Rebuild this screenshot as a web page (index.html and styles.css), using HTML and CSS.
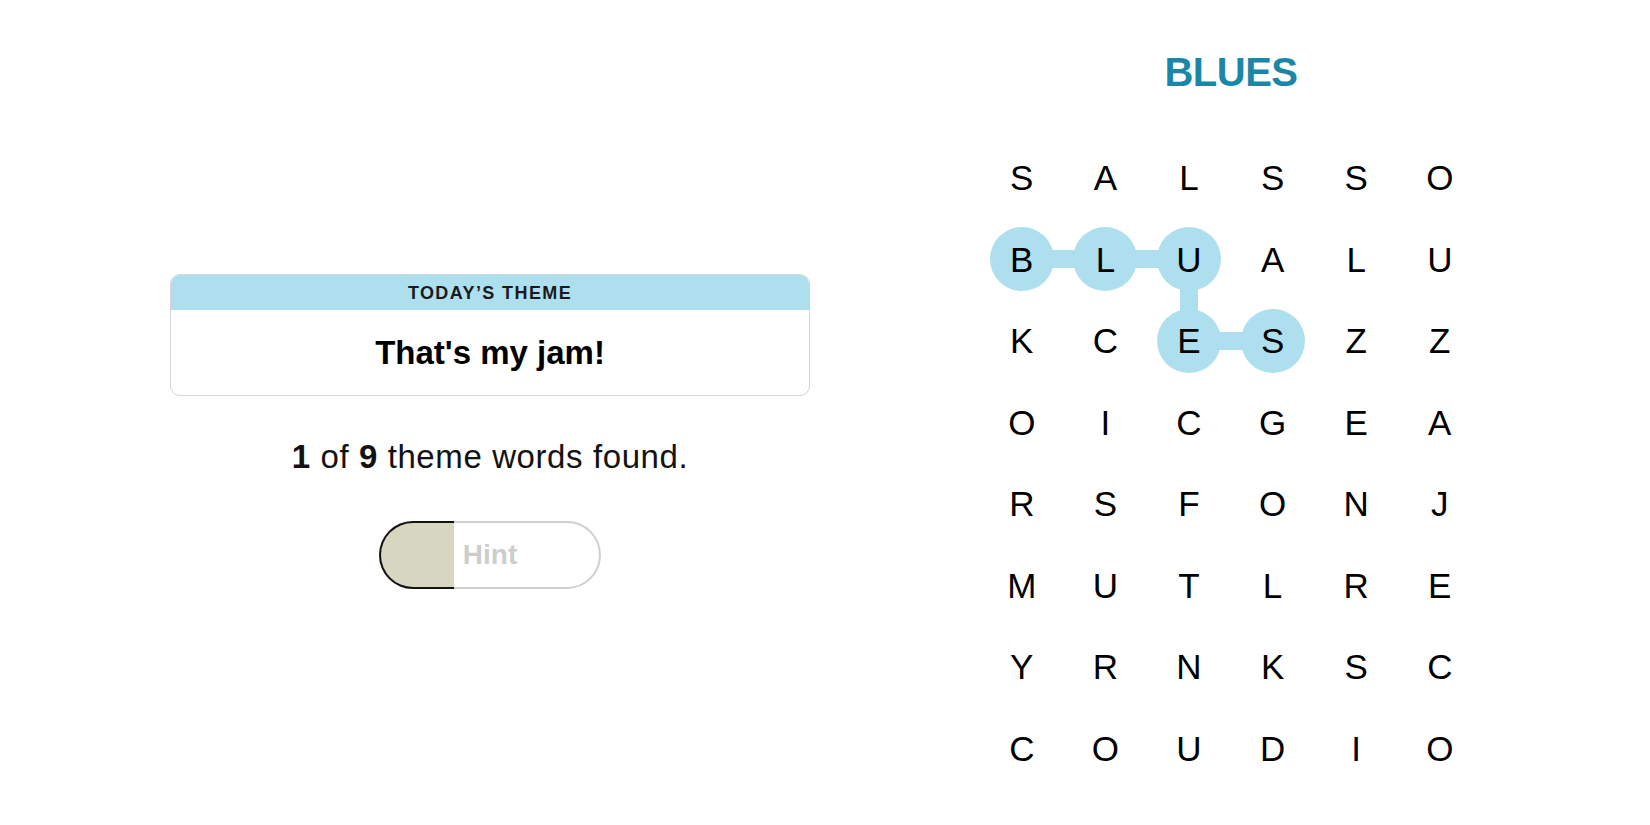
FILE: index.html
```html
<!DOCTYPE html>
<html lang="en">
<head>
    <meta charset="UTF-8">
    <meta name="viewport" content="width=device-width, initial-scale=1.0">
    <title>Strands</title>
    <link rel="stylesheet" href="styles.css">
</head>
<body>
    <div class="page">
        <div class="side">
            <div class="theme-box">
                <div class="theme-head">Today’s Theme</div>
                <div class="theme-body">That's my jam!</div>
            </div>

            <p class="progress"><strong>1</strong> of <strong>9</strong> theme words found.</p>

            <button class="hint-btn">
                <span class="hint-fill"></span>
                <span class="hint-label">Hint</span>
            </button>
        </div>

        <div class="board">
            <h2 class="word">BLUES</h2>

            <div class="grid">
                <!-- row 1 -->
                <div class="cell"><span>S</span></div>
                <div class="cell"><span>A</span></div>
                <div class="cell"><span>L</span></div>
                <div class="cell"><span>S</span></div>
                <div class="cell"><span>S</span></div>
                <div class="cell"><span>O</span></div>
                <!-- row 2 -->
                <div class="cell found link-right"><span>B</span></div>
                <div class="cell found link-right"><span>L</span></div>
                <div class="cell found link-down"><span>U</span></div>
                <div class="cell"><span>A</span></div>
                <div class="cell"><span>L</span></div>
                <div class="cell"><span>U</span></div>
                <!-- row 3 -->
                <div class="cell"><span>K</span></div>
                <div class="cell"><span>C</span></div>
                <div class="cell found link-right"><span>E</span></div>
                <div class="cell found"><span>S</span></div>
                <div class="cell"><span>Z</span></div>
                <div class="cell"><span>Z</span></div>
                <!-- row 4 -->
                <div class="cell"><span>O</span></div>
                <div class="cell"><span>I</span></div>
                <div class="cell"><span>C</span></div>
                <div class="cell"><span>G</span></div>
                <div class="cell"><span>E</span></div>
                <div class="cell"><span>A</span></div>
                <!-- row 5 -->
                <div class="cell"><span>R</span></div>
                <div class="cell"><span>S</span></div>
                <div class="cell"><span>F</span></div>
                <div class="cell"><span>O</span></div>
                <div class="cell"><span>N</span></div>
                <div class="cell"><span>J</span></div>
                <!-- row 6 -->
                <div class="cell"><span>M</span></div>
                <div class="cell"><span>U</span></div>
                <div class="cell"><span>T</span></div>
                <div class="cell"><span>L</span></div>
                <div class="cell"><span>R</span></div>
                <div class="cell"><span>E</span></div>
                <!-- row 7 -->
                <div class="cell"><span>Y</span></div>
                <div class="cell"><span>R</span></div>
                <div class="cell"><span>N</span></div>
                <div class="cell"><span>K</span></div>
                <div class="cell"><span>S</span></div>
                <div class="cell"><span>C</span></div>
                <!-- row 8 -->
                <div class="cell"><span>C</span></div>
                <div class="cell"><span>O</span></div>
                <div class="cell"><span>U</span></div>
                <div class="cell"><span>D</span></div>
                <div class="cell"><span>I</span></div>
                <div class="cell"><span>O</span></div>
            </div>
        </div>
    </div>
</body>
</html>
```

FILE: styles.css
```css
body {
    margin: 0;
    background: #fff;
    color: #121212;
    font-family: 'Liberation Sans', Arial, sans-serif;
}

.page {
    display: flex;
    gap: 170px;
    padding-left: 170px;
    height: 825px;
    box-sizing: border-box;
}

/* left column */
.side {
    width: 640px;
    padding-top: 274px;
    display: flex;
    flex-direction: column;
    align-items: center;
}

.theme-box {
    width: 100%;
    border: 1.5px solid #d5d5d5;
    border-radius: 10px;
    overflow: hidden;
    box-sizing: border-box;
}

.theme-head {
    height: 35px;
    line-height: 36px;
    background: #aedfee;
    text-align: center;
    text-transform: uppercase;
    font-size: 18px;
    font-weight: bold;
    letter-spacing: 1.4px;
    color: #1a1a1a;
}

.theme-body {
    height: 85px;
    display: flex;
    align-items: center;
    justify-content: center;
    font-size: 33px;
    font-weight: bold;
    color: #000;
}

.progress {
    margin: 41px 0 0;
    font-size: 33px;
    line-height: 40px;
    color: #121212;
    letter-spacing: 0.6px;
}

.hint-btn {
    position: relative;
    margin-top: 44px;
    width: 222px;
    height: 68px;
    border: 2px solid #cfcfcf;
    border-radius: 34px;
    background: #fff;
    padding: 0;
    font-family: inherit;
    cursor: pointer;
}

.hint-fill {
    position: absolute;
    left: -2px;
    top: -2px;
    bottom: -2px;
    width: 75px;
    box-sizing: border-box;
    border: 2px solid #121212;
    border-right: none;
    border-radius: 34px 0 0 34px;
    background: #d6d6c1;
}

.hint-label {
    position: relative;
    font-size: 28px;
    font-weight: bold;
    color: #cdcdcd;
}

/* right column */
.board {
    width: 502px;
    padding-top: 48px;
}

.word {
    margin: 0;
    text-align: center;
    font-size: 40px;
    line-height: 48px;
    font-weight: bold;
    letter-spacing: -0.5px;
    color: #1b87a8;
}

.grid {
    margin-top: 41px;
    display: grid;
    grid-template-columns: repeat(6, 83.6px);
    grid-template-rows: repeat(8, 81.5px);
}

.cell {
    position: relative;
    display: flex;
    align-items: center;
    justify-content: center;
}

.cell span {
    position: relative;
    z-index: 2;
    font-size: 35px;
    line-height: 1;
    color: #000;
}

.cell.found::before {
    content: "";
    position: absolute;
    left: 50%;
    top: 50%;
    width: 64px;
    height: 64px;
    margin: -32px 0 0 -32px;
    border-radius: 50%;
    background: #aedfee;
    z-index: 1;
}

.cell.link-right::after,
.cell.link-down::after {
    content: "";
    position: absolute;
    background: #aedfee;
    z-index: 1;
}

.cell.link-right::after {
    left: 50%;
    top: 50%;
    width: 83.6px;
    height: 18px;
    margin-top: -9px;
}

.cell.link-down::after {
    left: 50%;
    top: 50%;
    width: 18px;
    height: 81.5px;
    margin-left: -9px;
}
```
